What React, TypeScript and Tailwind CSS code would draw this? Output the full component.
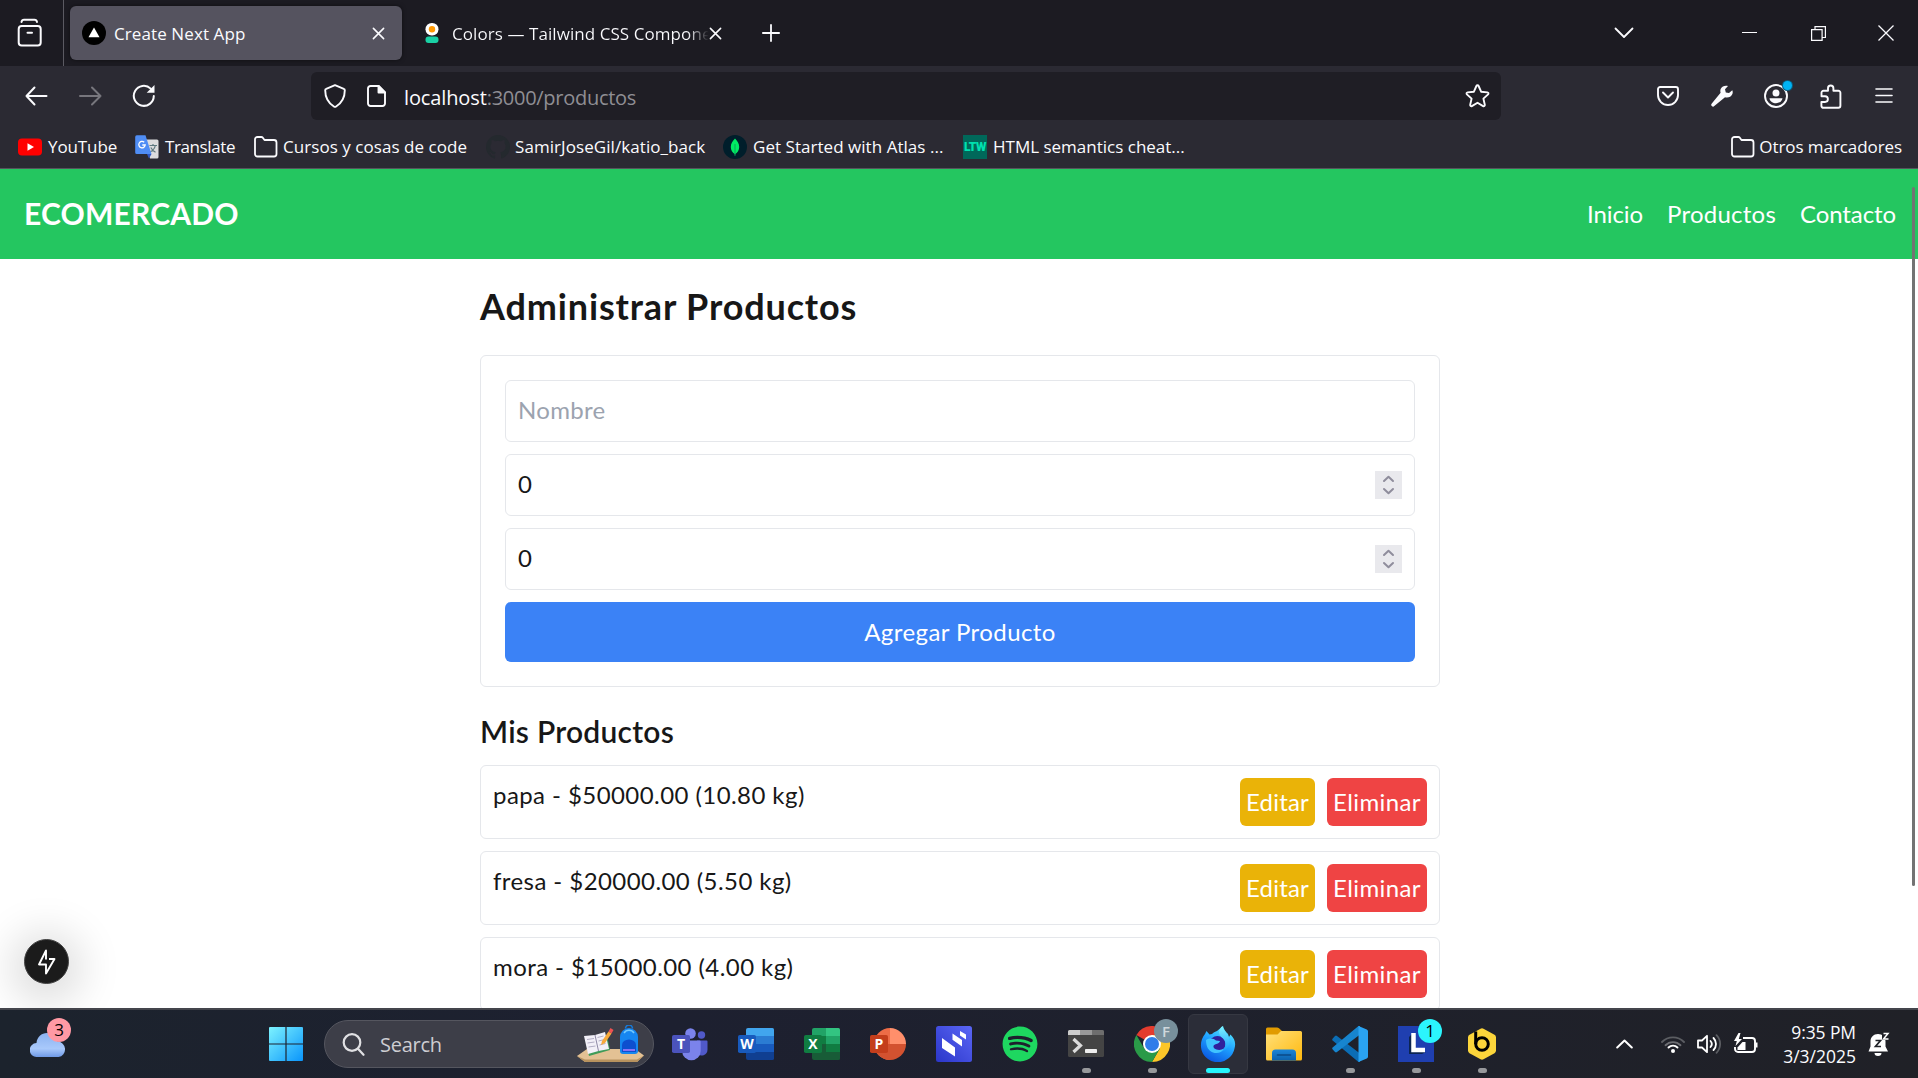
import type { ReactNode } from "react";
import { FaSpotify } from "react-icons/fa";

/* ---------- browser chrome icons ---------- */

const FolderOutline = () => (
  <svg width="24" height="24" viewBox="0 0 24 24" fill="none" stroke="#fbfbfe" strokeWidth="1.8" strokeLinejoin="round">
    <path d="M1 4.500a2.500 2.500 0 0 1 2.500-2.500h3.800a2 2 0 0 1 1.500.7l1.700 2.300H20a2.500 2.500 0 0 1 2.500 2.500v11.500A2.500 2.500 0 0 1 20 21.500H3.500A2.500 2.500 0 0 1 1 19z" />
  </svg>
);

const CloseIcon = () => (
  <svg width="13" height="13" viewBox="0 0 14 14" stroke="#fbfbfe" strokeWidth="1.700" strokeLinecap="round">
    <path d="M1.500 1.500l11 11M12.500 1.500l-11 11" />
  </svg>
);

const Cell = ({ className, children }: { className: string; children: ReactNode }) => (
  <div className={"flex shrink-0 items-center justify-center " + className}>{children}</div>
);

function TabBar() {
  return (
    <div className="flex h-[66px] items-center bg-[#1c1b22]">
      <div className="flex h-full w-16 items-center border-r border-[#5b5a62] pl-[17px]">
        <svg width="25" height="30" viewBox="0 0 25 30" fill="none" stroke="#fbfbfe" strokeWidth="2" strokeLinecap="round">
          <path d="M4.500 4c.3-1.500 1-2.200 2.500-2.200h10.500c1.500 0 2.200.7 2.500 2.200" />
          <rect x="1.700" y="8" width="22" height="19.500" rx="3" />
          <path d="M10.500 14.800h4.500" />
        </svg>
      </div>
      <div className="ml-1.5 flex h-[54px] w-[332px] items-center rounded-md bg-[#55535f] pl-3 shadow-[0_0_4px_rgba(0,0,0,0.5)]">
        <svg width="24" height="24" viewBox="0 0 24 24">
          <circle cx="12" cy="12" r="12" fill="#000" />
          <path d="M12 6.500l5.500 9.800h-11z" fill="#fff" />
        </svg>
        <span className="ml-2 grow whitespace-pre pt-px text-[17px] tracking-[0.1px]">Create Next App</span>
        <Cell className="mr-[17px] w-3.5"><CloseIcon /></Cell>
      </div>
      <div className="ml-[23px] flex w-[301px] items-center">
        <svg width="14" height="20" viewBox="0 0 14 20">
          <rect x="0.500" y="0" width="13" height="12.500" rx="6.200" fill="#fff" />
          <circle cx="7" cy="6.300" r="3.200" fill="#ff9903" />
          <rect x="0.500" y="13.500" width="13" height="6.500" rx="3" fill="#1ad1a5" />
        </svg>
        <span className="ml-[13px] w-[262px] shrink-0 whitespace-pre bg-linear-to-r from-[#fbfbfe] from-90% to-transparent to-98% bg-clip-text pt-px text-[17px] tracking-[0.07px] text-transparent">
          Colors — Tailwind CSS Compone
        </span>
        <Cell className="-ml-[7px] w-4"><CloseIcon /></Cell>
      </div>
      <Cell className="ml-[36px] w-[18px]">
        <svg width="18" height="18" viewBox="0 0 18 18" stroke="#fbfbfe" strokeWidth="1.800" strokeLinecap="round">
          <path d="M9 .9v16.200M.9 9h16.200" />
        </svg>
      </Cell>
      <Cell className="ml-auto mr-[81px] w-5">
        <svg width="20" height="12" viewBox="0 0 20 12" fill="none" stroke="#fbfbfe" strokeWidth="1.800" strokeLinecap="round" strokeLinejoin="round">
          <path d="M1.500 1.500L10 10l8.500-8.500" />
        </svg>
      </Cell>
      <Cell className="w-[69px] pb-[1px]">
        <div className="h-px w-[15px] bg-[#fbfbfe]" />
      </Cell>
      <Cell className="w-[69px]">
        <svg width="15" height="15" viewBox="0 0 15 15" fill="none" stroke="#fbfbfe" strokeWidth="1.200">
          <path d="M.6 3.600h10.500v10.800H.6zM4 3.500V.7h10.400v10.800H11.200" />
        </svg>
      </Cell>
      <Cell className="w-[65px]">
        <svg width="16" height="16" viewBox="0 0 16 16" stroke="#fbfbfe" strokeWidth="1.300">
          <path d="M.5.500l15 15M15.500.500l-15 15" />
        </svg>
      </Cell>
    </div>
  );
}

function Toolbar() {
  return (
    <div className="flex h-[60px] items-center bg-[#2b2a33]">
      <Cell className="ml-[9px] w-[54px]">
        <svg width="23" height="20" viewBox="0 0 23 20" fill="none" stroke="#fbfbfe" strokeWidth="2" strokeLinecap="round" strokeLinejoin="round">
          <path d="M21.500 10H1.500M9.500 1.500L1.500 10l8 8.500" />
        </svg>
      </Cell>
      <Cell className="w-[54px]">
        <svg width="23" height="20" viewBox="0 0 23 20" fill="none" stroke="#77767d" strokeWidth="2" strokeLinecap="round" strokeLinejoin="round">
          <path d="M1 10h20.500M13 1.500l8.500 8.500-8.500 8.500" />
        </svg>
      </Cell>
      <Cell className="w-[54px]">
        <svg width="24" height="24" viewBox="0 0 24 24" fill="none" stroke="#fbfbfe" strokeWidth="2" strokeLinecap="round">
          <path d="M21.800 12A10 10 0 1 1 18.700 4.600" />
          <path d="M22.500 1v7.800h-7.800z" fill="#fbfbfe" stroke="none" />
        </svg>
      </Cell>
      <div className="ml-[140px] flex h-12 w-[1190px] items-center rounded-md bg-[#1f1e25] pl-3">
        <svg width="24" height="24" viewBox="0 0 24 24" fill="none" stroke="#fbfbfe" strokeWidth="1.900" strokeLinejoin="round">
          <path d="M12 1.200l8.800 3.600a1.500 1.500 0 0 1 1 1.400c0 7-2.500 12.300-8.700 16.300a2 2 0 0 1-2.200 0C4.700 18.500 2.200 13.200 2.200 6.200a1.500 1.500 0 0 1 1-1.400z" />
        </svg>
        <svg className="ml-[20px]" width="19" height="22" viewBox="0 0 19 22" fill="none" stroke="#fbfbfe" strokeWidth="1.900" strokeLinejoin="round">
          <path d="M1 3.500A2.500 2.500 0 0 1 3.500 1h8.200L18 7.300v11.200a2.500 2.500 0 0 1-2.500 2.500h-12A2.500 2.500 0 0 1 1 18.500z" />
          <path d="M11.500 1v6.500H18z" fill="#fbfbfe" />
        </svg>
        <span className="ml-[18px] whitespace-pre pt-[3px] text-[20px] tracking-[-0.12px]">localhost</span>
        <span className="grow whitespace-pre pt-[3px] text-[20px] tracking-[-0.28px] text-[#8f8e94]">:3000/productos</span>
        <svg className="mr-[11px]" width="25" height="24" viewBox="0 0 25 24" fill="none" stroke="#fbfbfe" strokeWidth="1.900" strokeLinejoin="round">
          <path d="M12.500 1.300c.5 0 .9.300 1.100.7l2.500 5.700 6.300.7c1 .100 1.400 1.300.7 2l-4.700 4.200 1.400 6.200c.2 1-.8 1.800-1.700 1.300l-5.600-3.300-5.600 3.300c-.9.500-1.900-.3-1.700-1.300l1.400-6.200L1.900 10.400c-.7-.7-.3-1.900.7-2l6.300-.7L11.400 2c.2-.4.600-.7 1.100-.7z" />
        </svg>
      </div>
      <Cell className="ml-[140px] w-[54px]">
        <svg width="22" height="20" viewBox="0 0 22 20" fill="none" stroke="#fbfbfe" strokeWidth="1.900" strokeLinecap="round" strokeLinejoin="round">
          <path d="M3.200 1h15.600A2.200 2.200 0 0 1 21 3.200v5.800a10 10 0 0 1-20 0V3.200A2.200 2.200 0 0 1 3.200 1z" />
          <path d="M6 6.500l5 5 5-5" />
        </svg>
      </Cell>
      <Cell className="w-[54px]">
        <svg width="22" height="22" viewBox="0 0 22 22" fill="#fbfbfe">
          <path d="M21.300 5.200l-3.300 2.900-3.200-.7-.8-3.200L17 1c-2.700-1-6 .2-7.200 2.800-.6 1.300-.6 2.700-.2 4L.8 18.500a1.700 1.700 0 0 0 2.500 2.500L14 12.300c3 .9 6.200-.4 7.400-3.300.5-1.300.4-2.600-.1-3.800z" />
        </svg>
      </Cell>
      <Cell className="relative w-[54px]">
        <svg width="24" height="24" viewBox="0 0 24 24" fill="none">
          <circle cx="12" cy="12" r="11" stroke="#fbfbfe" strokeWidth="1.900" />
          <circle cx="12" cy="9" r="3.500" fill="#fbfbfe" />
          <path d="M5.500 14.200h13c-.5 3.200-3.300 5-6.500 5s-6-1.800-6.500-5z" fill="#fbfbfe" />
        </svg>
        <span className="absolute left-[34px] top-[-3px] h-[9px] w-[9px] rounded-full bg-[#00b3f4] ring-1 ring-[#0a5e80]" />
      </Cell>
      <Cell className="w-[54px] pl-0.5">
        <svg width="22" height="25" viewBox="0 0 22 25" fill="none" stroke="#fbfbfe" strokeWidth="1.900" strokeLinejoin="round">
          <path d="M1.500 11V8.800a2 2 0 0 1 2-2H8V4.200a2.700 2.700 0 0 1 5.400 0v2.600h5a2 2 0 0 1 2 2v13a2 2 0 0 1-2 2h-15a2 2 0 0 1-2-2V18H5a2.700 2.700 0 0 0 0-5.800H1.500z" />
        </svg>
      </Cell>
      <Cell className="w-[54px]">
        <svg width="18" height="16" viewBox="0 0 18 16" stroke="#fbfbfe" strokeWidth="1.600" strokeLinecap="round">
          <path d="M1 1h16M1 7.500h16M1 14h16" />
        </svg>
      </Cell>
    </div>
  );
}

function Bookmark({ icon, label, className }: { icon: ReactNode; label: string; className: string }) {
  return (
    <div className={"flex shrink-0 items-center whitespace-pre text-[17px] " + className}>
      {icon}
      <span>{label}</span>
    </div>
  );
}

function BookmarksBar() {
  return (
    <div className="flex h-[43px] items-center border-b border-[#55545c] bg-[#2b2a33] pl-[18px] pr-4">
      <Bookmark
        className="w-[117px] gap-1.5 tracking-[-0.1px]"
        label="YouTube"
        icon={
          <svg width="24" height="18" viewBox="0 0 24 18">
            <rect width="24" height="17" y="0.500" rx="4" fill="#f00" />
            <path d="M9.500 5.200v7.600L16 9z" fill="#fff" />
          </svg>
        }
      />
      <Bookmark
        className="w-[119px] gap-1.5 tracking-[-0.4px]"
        label="Translate"
        icon={
          <svg width="24" height="24" viewBox="0 0 24 24">
            <path d="M10 4.500h12a1.500 1.500 0 0 1 1.500 1.500v16a1.500 1.500 0 0 1-1.500 1.500h-7z" fill="#dcdcde" />
            <path d="M14.500 10.500h7.500M18 9v1.500M20.300 10.500c-.6 3-2.500 5-5 6.500M15.800 12.500c1 2 2.600 3.600 4.700 4.700" stroke="#5f7a80" strokeWidth="1.200" fill="none" />
            <path d="M12 19h4.500L14 23.500z" fill="#3058c4" />
            <path d="M1.800.3h8.700L16.500 19H1.800A1.600 1.600 0 0 1 .2 17.400V1.900A1.600 1.600 0 0 1 1.800.3z" fill="#4f8df5" />
            <path d="M9.200 7.300A3.200 3.200 0 1 0 10.200 10H7.300" stroke="#fff" strokeWidth="1.300" fill="none" />
          </svg>
        }
      />
      <Bookmark className="w-[232px] gap-[5px] tracking-[0.05px]" label="Cursos y cosas de code" icon={<FolderOutline />} />
      <Bookmark
        className="w-[237px] gap-[5px] tracking-[0.07px]"
        label="SamirJoseGil/katio_back"
        icon={
          <svg width="24" height="24" viewBox="0 0 16 16" fill="#24292e">
            <path d="M8 0C3.580 0 0 3.580 0 8c0 3.540 2.290 6.530 5.470 7.590.4.070.55-.17.55-.38v-1.490c-2.010.37-2.530-.49-2.690-.94-.09-.23-.48-.94-.82-1.130-.28-.15-.68-.52-.01-.53.63-.01 1.080.58 1.230.82.72 1.210 1.870.87 2.330.66.070-.52.28-.87.51-1.070-1.780-.2-3.640-.89-3.640-3.950 0-.87.31-1.590.82-2.150-.08-.2-.36-1.020.08-2.120 0 0 .67-.21 2.200.82a7.600 7.600 0 0 1 4 0c1.530-1.040 2.200-.82 2.200-.82.44 1.100.16 1.920.08 2.120.51.56.82 1.270.82 2.150 0 3.070-1.870 3.750-3.650 3.950.29.25.54.73.54 1.480v2.200c0 .21.15.46.55.38A8.010 8.010 0 0 0 16 8c0-4.420-3.580-8-8-8z" />
          </svg>
        }
      />
      <Bookmark
        className="w-[240px] gap-1.5 tracking-[0.04px]"
        label="Get Started with Atlas ..."
        icon={
          <svg width="24" height="24" viewBox="0 0 24 24">
            <circle cx="12" cy="12" r="12" fill="#001e2b" />
            <path d="M12 3.500c2.500 3 4.200 5 4.200 8.500 0 3.200-1.700 5.500-3.800 7l-.4 2-.4-2c-2.100-1.500-3.800-3.800-3.800-7 0-3.500 1.700-5.500 4.200-8.500z" fill="#00ed64" />
            <path d="M12 9v12" stroke="#0a8a50" strokeWidth="0.700" />
          </svg>
        }
      />
      <Bookmark
        className="gap-1.5"
        label="HTML semantics cheat..."
        icon={
          <span className="flex h-6 w-6 items-center justify-center bg-[#00685a] font-['Roboto'] text-[12px] font-black tracking-[-0.5px] text-[#00e0b0]">
            LTW
          </span>
        }
      />
      <Bookmark className="ml-auto gap-1 tracking-[-0.08px]" label="Otros marcadores" icon={<FolderOutline />} />
    </div>
  );
}

/* ---------- page ---------- */

function NumberField() {
  return (
    <div className="flex h-[62px] items-center justify-between rounded-md border border-[#e5e7eb] px-3">
      <span className="pb-0.5">0</span>
      <svg width="27" height="28" viewBox="0 0 27 28" fill="none" stroke="#8f8d9c" strokeWidth="2" strokeLinecap="round" strokeLinejoin="round">
        <rect width="27" height="28" fill="#e9e9ed" stroke="none" />
        <path d="M9 10l4.500-4.300L18 10M9 18l4.500 4.300L18 18" />
      </svg>
    </div>
  );
}

const products = [
  "papa - $50000.00 (10.80 kg)",
  "fresa - $20000.00 (5.50 kg)",
  "mora - $15000.00 (4.00 kg)",
];

function Page() {
  return (
    <div className="relative flex h-[839px] flex-col overflow-hidden bg-white font-['Lato',sans-serif] text-2xl text-[#171717]">
      <nav className="flex h-[90px] shrink-0 items-center justify-between bg-[#24c660] pl-6 pr-[22px] text-white">
        <span className="pb-px text-[30px] font-bold tracking-[0.2px]">ECOMERCADO</span>
        <div className="flex gap-6 pb-px">
          <span className="w-14 whitespace-pre tracking-[-0.09px]">Inicio</span>
          <span className="w-[109px] whitespace-pre tracking-[0.24px]">Productos</span>
          <span className="w-[96px] whitespace-pre tracking-[-0.1px]">Contacto</span>
        </div>
      </nav>
      <main className="ml-[480px] flex w-[960px] shrink-0 flex-col pt-[23px]">
        <h1 className="text-[36px]/[48px] font-bold tracking-[0.85px]">Administrar Productos</h1>
        <div className="mt-[25px] flex h-[332px] flex-col gap-3 rounded-md border border-[#e5e7eb] p-6">
          <div className="flex h-[62px] items-center rounded-md border border-[#e5e7eb] px-3 pb-0.5 tracking-[0.3px] text-[#9ca3af]">Nombre</div>
          <NumberField />
          <NumberField />
          <div className="flex h-[60px] items-center justify-center rounded-md bg-[#3b82f6] pb-px tracking-[0.42px] text-white">Agregar Producto</div>
        </div>
        <h2 className="mt-[23px] text-[30px]/[42px] font-semibold tracking-[0.25px]">Mis Productos</h2>
        <ul className="mt-[13px] flex flex-col gap-3">
          {products.map((text) => (
            <li key={text} className="flex h-[74px] justify-between rounded-md border border-[#e5e7eb] p-3">
              <span className="text-[24px]/[34px] tracking-[0.43px]">{text}</span>
              <div className="flex gap-3 text-white">
                <span className="flex w-[75px] items-center justify-center rounded-md bg-[#eab308] pb-px tracking-[0.2px]">Editar</span>
                <span className="flex w-[100px] items-center justify-center rounded-md bg-[#ef4444] pb-px tracking-[0.4px]">Eliminar</span>
              </div>
            </li>
          ))}
        </ul>
      </main>
      <div className="absolute right-[3px] top-[18px] h-[699px] w-[3px] rounded-full bg-[#737373]" />
      <div className="absolute bottom-6 left-6 flex h-[45px] w-[45px] items-center justify-center rounded-full border border-[#444] bg-[#1b1b1b] shadow-[0_6px_40px_14px_rgba(0,0,0,0.13)]">
        <svg width="20" height="32" viewBox="0 0 20 32" fill="none" stroke="#fff" strokeWidth="1.900" strokeLinejoin="round">
          <path d="M9 13.500V4.500L2 18.500h7v9l8.500-14.500h-5.500" />
        </svg>
      </div>
    </div>
  );
}

/* ---------- taskbar ---------- */

const Letter = ({ x, y, s, children }: { x: number; y: number; s: number; children: string }) => (
  <text x={x} y={y} fontSize={s} fontWeight="700" fill="#fff" textAnchor="middle" fontFamily="Open Sans, sans-serif">
    {children}
  </text>
);

const Teams = () => (
  <svg width="36" height="36" viewBox="0 0 36 36">
    <circle cx="29.500" cy="9" r="3.700" fill="#5059c9" />
    <path d="M25 14.500h9.500a1 1 0 0 1 1 1v8a6 6 0 0 1-10.500 4z" fill="#5059c9" />
    <circle cx="18.500" cy="7.500" r="5.300" fill="#7b83eb" />
    <path d="M11 14.500h16.500a1.200 1.200 0 0 1 1.200 1.200V25a9.300 9.300 0 0 1-18.600 0z" fill="#7b83eb" />
    <rect x="0" y="9" width="18" height="18" rx="1.800" fill="#4b53bc" />
    <Letter x={9} y={23} s={14}>T</Letter>
  </svg>
);

const Word = () => (
  <svg width="36" height="36" viewBox="0 0 36 36">
    <path d="M10 2h24.500a1.500 1.500 0 0 1 1.500 1.500V10H8V4a2 2 0 0 1 2-2z" fill="#41a5ee" />
    <path d="M8 10h28v8H8z" fill="#2b7cd3" />
    <path d="M8 18h28v8H8z" fill="#185abd" />
    <path d="M8 26h28v6.500a1.500 1.500 0 0 1-1.500 1.500H10a2 2 0 0 1-2-2z" fill="#103f91" />
    <rect x="0" y="9" width="18" height="18" rx="1.800" fill="#185abd" />
    <Letter x={9} y={23} s={14}>W</Letter>
  </svg>
);

const Excel = () => (
  <svg width="36" height="36" viewBox="0 0 36 36">
    <path d="M8 4a2 2 0 0 1 2-2h12v8H8z" fill="#21a366" />
    <path d="M22 2h12.500A1.500 1.500 0 0 1 36 3.500V10H22z" fill="#33c481" />
    <path d="M8 10h14v8H8z" fill="#107c41" />
    <path d="M22 10h14v8H22z" fill="#21a366" />
    <path d="M8 18h14v8H8zM8 26h28v6.500a1.500 1.500 0 0 1-1.500 1.500H10a2 2 0 0 1-2-2z" fill="#185c37" />
    <path d="M22 18h14v8H22z" fill="#107c41" />
    <rect x="0" y="9" width="18" height="18" rx="1.800" fill="#107c41" />
    <Letter x={9} y={23} s={14}>X</Letter>
  </svg>
);

const PowerPoint = () => (
  <svg width="36" height="36" viewBox="0 0 36 36">
    <path d="M20 18V34A16 16 0 0 1 20 2z" fill="#ed6c47" />
    <path d="M20 2a16 16 0 0 1 16 16H20z" fill="#ff8f6b" />
    <path d="M4 18h32a16 16 0 0 1-32 0z" fill="#d35230" />
    <rect x="0" y="9" width="18" height="18" rx="1.800" fill="#c43e1c" />
    <Letter x={9} y={23} s={14}>P</Letter>
  </svg>
);

const BlueApp = () => (
  <svg width="36" height="36" viewBox="0 0 36 36">
    <defs>
      <linearGradient id="blueApp" x1="0" y1="1" x2="1" y2="0">
        <stop offset="0" stopColor="#2b36c9" />
        <stop offset="1" stopColor="#5a66f5" />
      </linearGradient>
    </defs>
    <rect width="36" height="36" rx="2.500" fill="url(#blueApp)" />
    <path d="M6 12l13 9.500V30.500L6 22zM16.500 7.500l9.500 6.500v6.500l-9.500-6.800zM24 5l6 3.500V13.500l-6-4z" fill="#fff" />
  </svg>
);

const TerminalIcon = () => (
  <svg width="36" height="28" viewBox="0 0 36 28">
    <rect width="36" height="27" rx="1.500" fill="#444" />
    <path d="M0 5V1.500A1.500 1.500 0 0 1 1.500 0H12v5z" fill="#ccc" />
    <path d="M12 0h12v5H12z" fill="#999" />
    <path d="M24 0h10.500A1.500 1.500 0 0 1 36 1.500V5H24z" fill="#6e6e6e" />
    <path d="M5.500 9l7 6.500-7 6.500" stroke="#dcdcdc" strokeWidth="3.200" fill="none" />
    <rect x="17" y="19" width="12" height="4" rx="0.800" fill="#eee" />
  </svg>
);

const Chrome = () => (
  <svg width="36" height="36" viewBox="0 0 36 36">
    <path d="M18 18L2.400 9A18 18 0 0 1 33.600 9z" fill="#e33b2e" />
    <path d="M18 18V9h15.600A18 18 0 0 1 18 36l7.800-13.500z" fill="#fcc629" />
    <path d="M18 18l7.800 4.500L18 36A18 18 0 0 1 2.400 9l7.800 13.500z" fill="#2a9a48" />
    <circle cx="18" cy="18" r="9" fill="#fff" />
    <circle cx="18" cy="18" r="7" fill="#2f7de9" />
  </svg>
);

const FirefoxDev = () => (
  <svg width="36" height="36" viewBox="0 0 36 36">
    <defs>
      <linearGradient id="foxBody" x1="0.800" y1="0" x2="0.300" y2="1">
        <stop offset="0" stopColor="#5df0ff" />
        <stop offset="0.500" stopColor="#1ea0ff" />
        <stop offset="1" stopColor="#0a55e0" />
      </linearGradient>
      <linearGradient id="foxTail" x1="0" y1="0" x2="0" y2="1">
        <stop offset="0" stopColor="#80f4ff" />
        <stop offset="1" stopColor="#159cff" />
      </linearGradient>
    </defs>
    <path d="M5 8l1.500-3 3 3.500L12 8c2-2 3.500-2.500 5-3l6-5c1 4 2.500 5.500 5 8l1 3 1.500-2.500C35 13 36 17 34.500 22.500A17 17 0 0 1 1.500 24C0 18 1.500 12 5 8z" fill="url(#foxBody)" />
    <circle cx="17.500" cy="18" r="8" fill="#30219c" />
    <path d="M22.500 0c.8 5 6.500 8 7 15 .4 6-4 10-8.500 10.500 4-3 5.500-7 3.500-11-1.500-3-5-4-5.500-8 0-2.500 1.500-5 3.500-6.500z" fill="url(#foxTail)" />
    <path d="M6 14c4-2.500 8-1.500 10 .5l4 .5c-.5 2.500-3.500 2.800-5 3.500-2.500 1-2 4 1.500 5 3 1 5.500.2 7.500-1-2 4-6.500 5.500-11 4-4.500-1.500-7-6-7-12.500z" fill="#3fc4ff" />
  </svg>
);

const Explorer = () => (
  <svg width="36" height="34" viewBox="0 0 36 34">
    <defs>
      <linearGradient id="folderFront" x1="0" y1="0" x2="1" y2="1">
        <stop offset="0" stopColor="#ffe07a" />
        <stop offset="1" stopColor="#ffb90f" />
      </linearGradient>
      <linearGradient id="folderDock" x1="0" y1="0" x2="0" y2="1">
        <stop offset="0" stopColor="#1c85d8" />
        <stop offset="1" stopColor="#0c61ac" />
      </linearGradient>
    </defs>
    <path d="M0 2a1.500 1.500 0 0 1 1.500-1.500H11a3 3 0 0 1 2 .8L16 4v6H0z" fill="#e19b00" />
    <path d="M0 7.500h11.500L15 4h19.500A1.500 1.500 0 0 1 36 5.500V32a1.500 1.500 0 0 1-1.500 1.500h-33A1.500 1.500 0 0 1 0 32z" fill="url(#folderFront)" />
    <path d="M6 33.500V26a3.500 3.500 0 0 1 3.500-3.500h17A3.500 3.500 0 0 1 30 26v7.500z" fill="url(#folderDock)" />
    <path d="M11.500 28h13" stroke="#0b4a86" strokeWidth="1.600" strokeLinecap="round" />
  </svg>
);

const VSCode = () => (
  <svg width="36" height="36" viewBox="0 0 36 36">
    <path d="M.5 12.800L3 10a1.500 1.500 0 0 1 2 0L28 27.500V36h-1.500L.6 14.500a1.200 1.200 0 0 1 0-1.700z" fill="#0b6db5" />
    <path d="M.5 23.200L3 26a1.500 1.500 0 0 0 2 0L28 8.500V0h-1.500L.6 21.500a1.200 1.200 0 0 0 0 1.700z" fill="#1785cf" />
    <path d="M26.500 36V0l8.300 3.600A2 2 0 0 1 36 5.500v25a2 2 0 0 1-1.200 1.900z" fill="#2aa3f2" />
  </svg>
);

const LApp = () => (
  <svg width="36" height="36" viewBox="0 0 36 36">
    <rect width="36" height="36" fill="#1f3fb0" />
    <path d="M15 7l-4 4v17l4-2zM15 26l-4 2h13l4-2z" fill="#0c2552" />
    <path d="M15.500 7v17H27" stroke="#fff" strokeWidth="4.500" fill="none" />
  </svg>
);

const BeeApp = () => (
  <svg width="30" height="32" viewBox="0 0 30 32">
    <path d="M13.500.8a3 3 0 0 1 3 0l11 6a3 3 0 0 1 1.500 2.600v13.200a3 3 0 0 1-1.500 2.600l-11 6a3 3 0 0 1-3 0l-11-6A3 3 0 0 1 1 22.600V9.400a3 3 0 0 1 1.500-2.600z" fill="#fcd53b" />
    <path d="M8.700 3.500V16" stroke="#000" strokeWidth="3" />
    <circle cx="15" cy="16" r="6.300" fill="none" stroke="#000" strokeWidth="3" />
    <circle cx="12" cy="10" r="1" fill="#000" />
  </svg>
);

function AppSlot({ icon, running, active, badge }: { icon: ReactNode; running?: boolean; active?: boolean; badge?: ReactNode }) {
  return (
    <div className="relative flex h-full w-[66px] items-center justify-center">
      <div
        className={
          active
            ? "flex h-[60px] w-[60px] items-center justify-center rounded-md border border-[#363842] bg-[#2b2d38]"
            : "flex h-[60px] w-[60px] items-center justify-center"
        }
      >
        {icon}
      </div>
      {badge}
      {running && (
        <span
          className={
            active
              ? "absolute bottom-[5px] h-[5px] w-6 rounded-full bg-[#25f5fd]"
              : "absolute bottom-[5px] h-[5px] w-[9px] rounded-full bg-[#97989b]"
          }
        />
      )}
    </div>
  );
}

function SearchBox() {
  return (
    <div className="ml-[21px] flex h-12 w-[330px] items-center rounded-full border border-[#55565f] bg-[#3d3e48] pl-[17px] pr-2">
      <svg width="23" height="23" viewBox="0 0 23 23" fill="none" stroke="#e0e0e3" strokeWidth="2.200" strokeLinecap="round">
        <circle cx="10" cy="9.500" r="8.300" />
        <path d="M16 15.800l5.500 6" />
      </svg>
      <span className="ml-[15px] grow pt-px text-[20px] tracking-[-0.25px] text-[#cdcdd2]">Search</span>
      <svg width="68" height="38" viewBox="0 0 68 38">
        <path d="M0 31l10-7h48l9 6.500-7 6.500H8z" fill="#e3c194" />
        <path d="M0 31l8 3.500h52l7-4-7 6.500H8z" fill="#b8925e" />
        <path d="M8 13l22-3 3 15-21 6z" fill="#3f9b58" />
        <path d="M7 11l11-1 3.500 16-10.500 3zM18 10l10-3 4 17-10.500 2z" fill="#f2f0f8" />
        <path d="M10 14.500l7-1M10.500 18l7-1M11.500 22l7-1M20.500 12.500l6-1.500M21.500 16l6-1.500M22.500 20l6-1.500" stroke="#a9a5bd" strokeWidth="0.900" />
        <path d="M18 10l3.500 16" stroke="#8d88a5" />
        <path d="M25 16l6.500-9.500 3 2-6.500 9.500-4 2z" fill="#f7a93a" />
        <path d="M31.500 6.500L33.500 3l3 2-2 3.500z" fill="#f05252" />
        <path d="M48.500 3.500a3.500 3.500 0 0 1 7 0" stroke="#1779d8" strokeWidth="1.600" fill="none" />
        <path d="M43 12a9 9 0 0 1 18 0v14a3 3 0 0 1-3 3H46a3 3 0 0 1-3-3z" fill="#1686f0" />
        <path d="M47 8a6 6 0 0 1 10 0" stroke="#74cbff" strokeWidth="1.500" fill="none" />
        <path d="M45 20a7 5.500 0 0 1 14 0v7H45z" fill="#0d4fcf" />
        <path d="M46 25h12" stroke="#a87bff" strokeWidth="1.600" />
      </svg>
    </div>
  );
}

function SystemTray() {
  return (
    <div className="ml-auto flex h-full items-center">
      <svg className="mr-[28px]" width="17" height="10" viewBox="0 0 17 10" fill="none" stroke="#fff" strokeWidth="2" strokeLinecap="round" strokeLinejoin="round">
        <path d="M1.200 8.500l7.300-7 7.300 7" />
      </svg>
      <svg className="mr-3" width="24" height="20" viewBox="0 0 24 20" fill="none" strokeWidth="1.900" strokeLinecap="round">
        <path d="M1 8a15.500 15.500 0 0 1 22 0" stroke="#5b5d62" />
        <path d="M4.500 11.200a10.700 10.700 0 0 1 15 0" stroke="#fff" strokeOpacity="0.350" />
        <path d="M7.500 13.500a6.300 6.300 0 0 1 9 0" stroke="#fff" />
        <circle cx="12" cy="17" r="2" fill="#fff" />
      </svg>
      <svg className="mr-3" width="24" height="22" viewBox="0 0 24 22" fill="none" stroke="#fff" strokeWidth="1.800" strokeLinecap="round" strokeLinejoin="round">
        <path d="M1 7.500h4l5-4.700v16.400l-5-4.700H1z" />
        <path d="M13.500 8a4.500 4.500 0 0 1 0 6M16.500 5a8.500 8.500 0 0 1 0 12" />
        <path d="M19.500 2.200a12.500 12.500 0 0 1 0 17.600" stroke="#5b5d62" />
      </svg>
      <svg className="mr-6" width="26" height="22" viewBox="0 0 26 22" fill="none" stroke="#fff" strokeWidth="1.900" strokeLinejoin="round">
        <path d="M10 5h9a3 3 0 0 1 3 3v8a3 3 0 0 1-3 3H5a3 3 0 0 1-3-3v-2" />
        <path d="M22.500 9.500h2v5h-2z" fill="#fff" stroke="none" />
        <path d="M4.500 17v-2.500l5-5.500h3v8z" fill="#fff" stroke="none" />
        <path d="M5.500 0L1 8h2.800L2.500 13 9 6H5.800L7.500 0z" fill="#fff" stroke="none" />
      </svg>
      <div className="mr-3 flex flex-col items-end whitespace-pre text-[17.500px] leading-6">
        <span className="tracking-[-0.1px]">9:35 PM</span>
        <span>3/3/2025</span>
      </div>
      <svg className="mr-7" width="22" height="24" viewBox="0 0 22 24">
        <path d="M10 2c4.500 0 7.500 3.200 7.500 7.500v5l2.500 5H.5l2-5v-5C2.500 5.200 5.500 2 10 2z" fill="#fff" />
        <path d="M6.500 21h7a3.500 3 0 0 1-7 0z" fill="#fff" />
        <path d="M7.500 8.500h5l-5 6h5.500" stroke="#202228" strokeWidth="1.700" fill="none" />
        <path d="M14 0h8v8h-8z" fill="#202228" />
        <path d="M15.500 1.500h4.500L15.500 7h5" stroke="#fff" strokeWidth="1.500" fill="none" />
      </svg>
    </div>
  );
}

function Taskbar() {
  return (
    <div className="flex h-[70px] items-center border-t-2 border-[#44454c] bg-linear-to-r from-[#1c232d] via-[#1d2030] via-35% to-[#202127]">
      <div className="relative ml-[30px] flex h-full w-[239px] items-center">
        <svg className="mt-0.5" width="36" height="24" viewBox="0 0 36 24">
          <defs>
            <linearGradient id="cloud" x1="0" y1="0" x2="0" y2="1">
              <stop offset="0" stopColor="#8bb2f0" />
              <stop offset="0.650" stopColor="#a9c9fb" />
              <stop offset="1" stopColor="#6f9ae6" />
            </linearGradient>
          </defs>
          <path d="M7 24a7 7 0 0 1-.5-14C7 4 11.500 0 17 0s9.500 4 10.500 8.500A7.800 7.800 0 0 1 28.500 24z" fill="url(#cloud)" />
        </svg>
        <span className="absolute left-[17px] top-[8px] flex h-6 w-6 items-center justify-center rounded-full bg-[#ff99a4] text-[17px] text-black">3</span>
      </div>
      <svg width="34" height="34" viewBox="0 0 34 34">
        <defs>
          <linearGradient id="win" x1="0" y1="0" x2="34" y2="34" gradientUnits="userSpaceOnUse">
            <stop offset="0" stopColor="#7df3ff" />
            <stop offset="1" stopColor="#0a95fb" />
          </linearGradient>
        </defs>
        <path d="M1 0h15.400v16.400H0V1a1 1 0 0 1 1-1zM17.600 0H33a1 1 0 0 1 1 1v15.400H17.600zM0 17.600h16.400V34H1a1 1 0 0 1-1-1zM17.600 17.600H34V33a1 1 0 0 1-1 1H17.600z" fill="url(#win)" />
      </svg>
      <SearchBox />
      <div className="ml-[3px] flex h-full">
        <AppSlot icon={<Teams />} />
        <AppSlot icon={<Word />} />
        <AppSlot icon={<Excel />} />
        <AppSlot icon={<PowerPoint />} />
        <AppSlot icon={<BlueApp />} />
        <AppSlot icon={<FaSpotify size={36} color="#1ed760" />} />
        <AppSlot icon={<TerminalIcon />} running />
        <AppSlot
          icon={<Chrome />}
          running
          badge={<span className="absolute left-[35px] top-[9px] flex h-6 w-6 items-center justify-center rounded-full bg-[#78909c] text-[15px] font-semibold text-[#cfd8dc]">F</span>}
        />
        <AppSlot icon={<FirefoxDev />} running active />
        <AppSlot icon={<Explorer />} />
        <AppSlot icon={<VSCode />} running />
        <AppSlot
          icon={<LApp />}
          running
          badge={<span className="absolute left-[35px] top-[9px] flex h-6 w-6 items-center justify-center rounded-full bg-[#2bf5fd] text-[17px] text-black">1</span>}
        />
        <AppSlot icon={<BeeApp />} running />
      </div>
      <SystemTray />
    </div>
  );
}

export default function App() {
  return (
    <div className="flex h-[1078px] w-[1918px] flex-col overflow-hidden bg-white font-['Open_Sans',sans-serif] text-[#fbfbfe]">
      <TabBar />
      <Toolbar />
      <BookmarksBar />
      <Page />
      <Taskbar />
    </div>
  );
}
